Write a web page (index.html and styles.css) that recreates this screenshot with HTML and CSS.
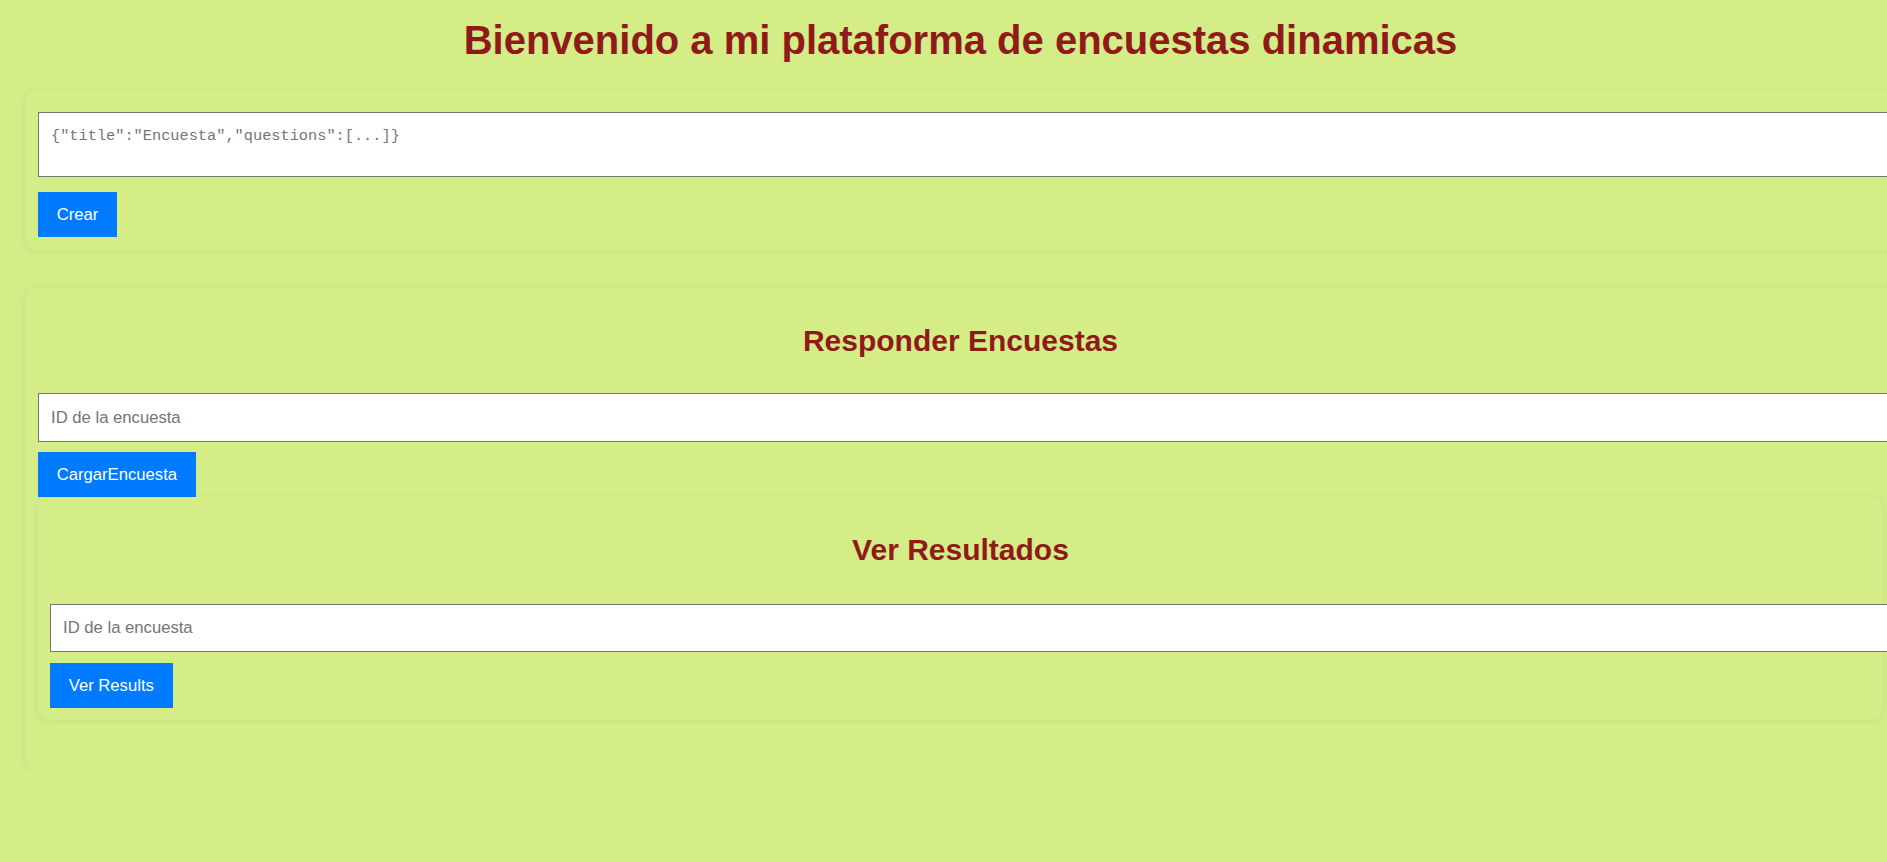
FILE: index.html
```html
<!DOCTYPE html>
<html lang="es">
<head>
<meta charset="utf-8">
<title>Encuestas dinamicas</title>
<link rel="stylesheet" href="styles.css">
</head>
<body>
<div class="page">
  <h1 class="title">Bienvenido a mi plataforma de encuestas dinamicas</h1>

  <section class="card card-create">
    <textarea class="json-input" placeholder='{"title":"Encuesta","questions":[...]}'></textarea>
    <button class="btn btn-create">Crear</button>
  </section>

  <section class="card card-answer">
    <h2 class="section-title">Responder Encuestas</h2>
    <input class="id-input" type="text" placeholder="ID de la encuesta">
    <button class="btn btn-load">CargarEncuesta</button>

    <div class="card card-results">
      <h2 class="section-title section-title-inner">Ver Resultados</h2>
      <input class="id-input id-input-inner" type="text" placeholder="ID de la encuesta">
      <button class="btn btn-results">Ver Results</button>
    </div>
  </section>
</div>
</body>
</html>
```

FILE: styles.css
```css
html, body {
  margin: 0;
  padding: 0;
  overflow: hidden;
  background: #d4ed87;
}

body {
  font-family: "Liberation Sans", Arial, sans-serif;
}

.page {
  width: 1871px;
  margin-left: 25px;
  padding-top: 17px;
}

.title {
  margin: 0 0 27px;
  font-size: 40px;
  line-height: 46px;
  font-weight: bold;
  color: #901a1a;
  text-align: center;
}

.card {
  box-sizing: border-box;
  display: flex;
  flex-direction: column;
  align-items: flex-start;
  background: #d4ed87;
  border-radius: 10px;
  box-shadow: 0 1px 6px rgba(0, 0, 0, 0.07);
}

.card-create {
  padding: 22px 13px 13px;
  margin-bottom: 37px;
}

.card-answer {
  padding: 37px 13px 50px;
}

.card-results {
  width: 100%;
  padding: 36px 12px 12px;
}

.json-input {
  box-sizing: border-box;
  display: block;
  width: calc(100% + 40px);
  height: 65px;
  margin: 0 0 15px;
  padding: 14px 12px 10px;
  border: 1px solid #767676;
  border-radius: 0;
  background: #fff;
  font-family: "Liberation Mono", "DejaVu Sans Mono", monospace;
  font-size: 15.3px;
  line-height: 18px;
  resize: none;
  outline: none;
}

.json-input::placeholder {
  color: #757575;
}

.section-title {
  align-self: stretch;
  margin: 0 0 35px;
  font-size: 30px;
  line-height: 34px;
  font-weight: bold;
  color: #901a1a;
  text-align: center;
}

.section-title-inner {
  margin-bottom: 37px;
}

.id-input {
  box-sizing: border-box;
  display: block;
  width: calc(100% + 25px);
  height: 49px;
  margin: 0 0 10px;
  padding: 0 12px;
  border: 1px solid #767676;
  border-radius: 0;
  background: #fff;
  font-family: "Liberation Sans", Arial, sans-serif;
  font-size: 16.67px;
  color: #222;
  outline: none;
}

.id-input-inner {
  height: 48px;
  margin-bottom: 11px;
}

.id-input::placeholder {
  color: #757575;
}

.btn {
  display: block;
  height: 45px;
  padding: 0 18.7px;
  border: none;
  border-radius: 0;
  background: #007bff;
  color: #fff;
  font-family: "Liberation Sans", Arial, sans-serif;
  font-size: 16.67px;
  line-height: 45px;
  cursor: pointer;
}
```
